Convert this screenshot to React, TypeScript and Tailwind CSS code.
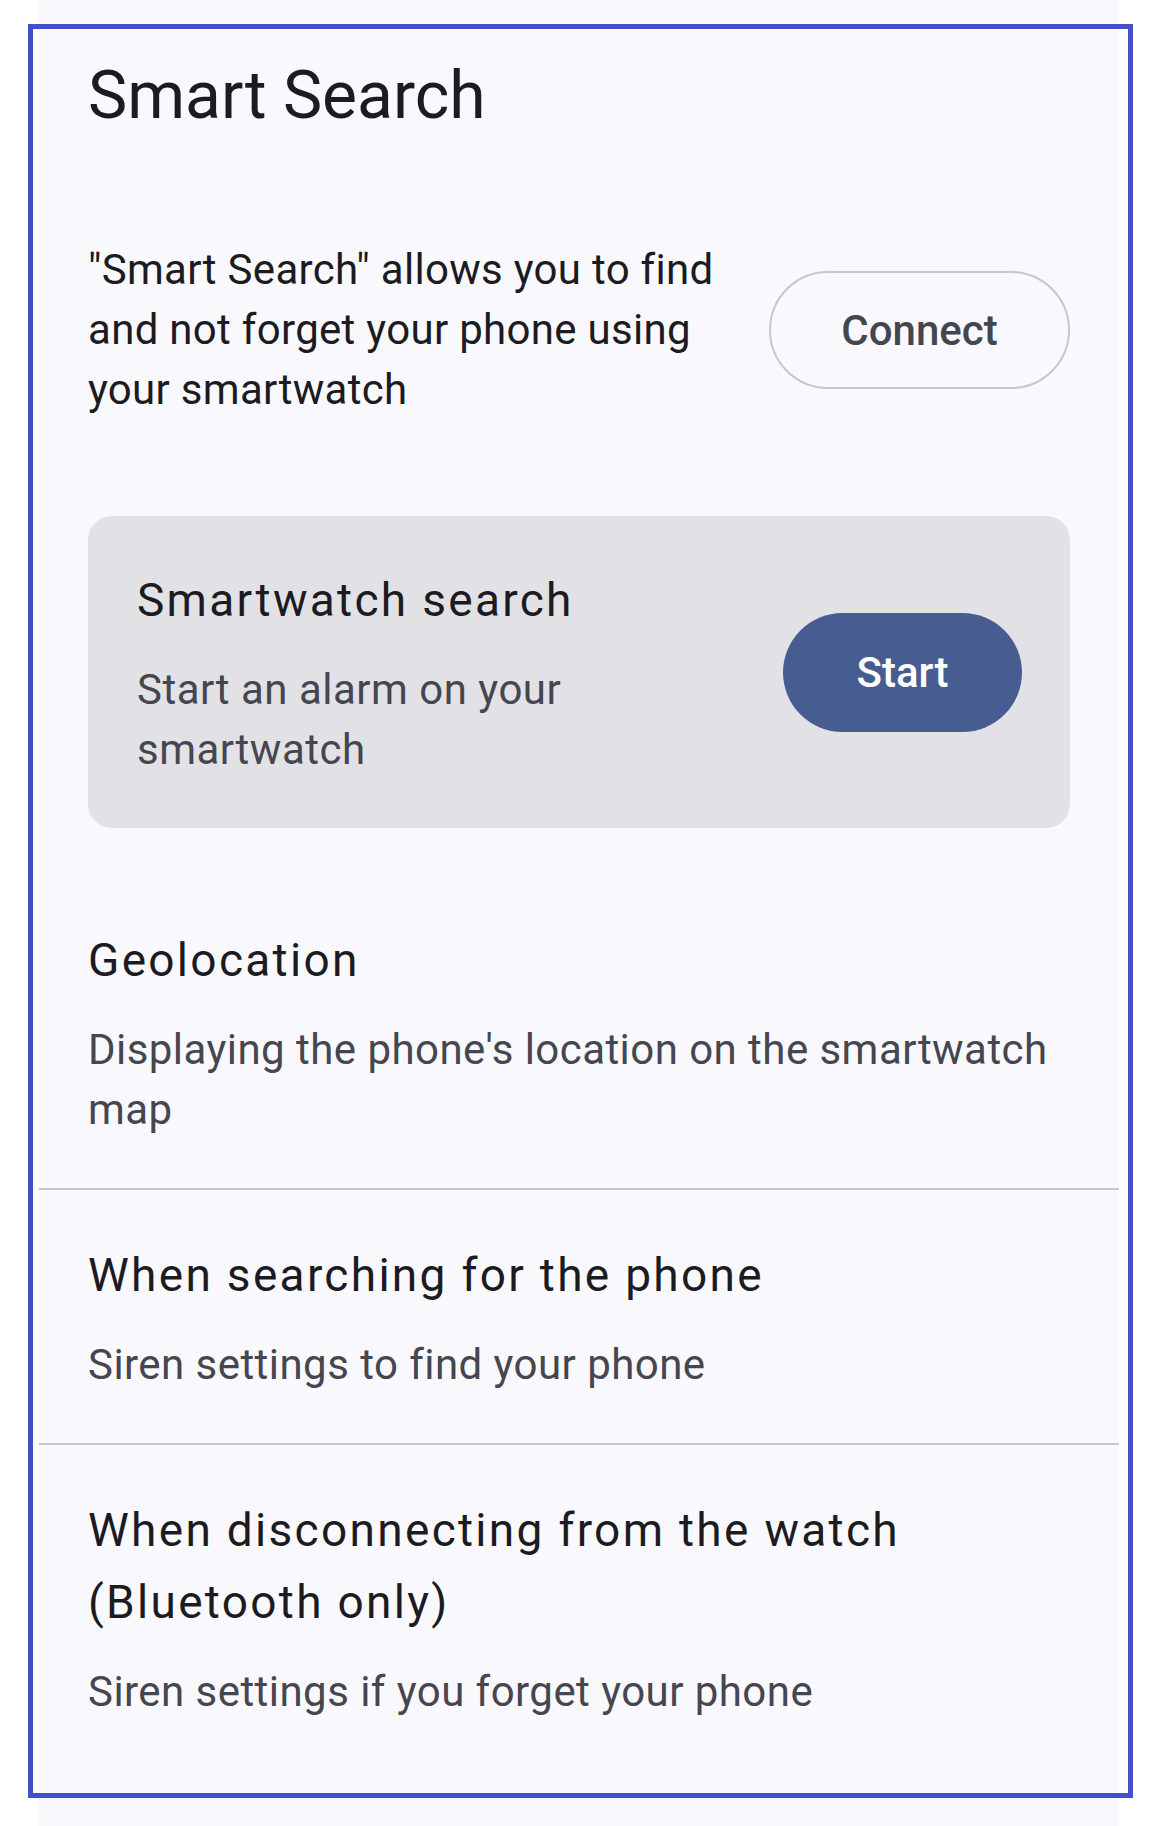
const sections = [
  {
    title: "Geolocation",
    desc: "Displaying the phone's location on the smartwatch map",
  },
  {
    title: "When searching for the phone",
    desc: "Siren settings to find your phone",
  },
  {
    title: "When disconnecting from the watch (Bluetooth only)",
    desc: "Siren settings if you forget your phone",
    last: true,
  },
];

export default function App() {
  return (
    <div className="relative min-h-[1826px] bg-white font-['Roboto',sans-serif]">
      {/* app surface */}
      <div className="ml-[39px] min-h-[1826px] w-[1080px] bg-[#f9f9fd] pt-[56px]">
        <h1 className="px-[49px] text-[66px] leading-[80px] text-[#1b1b21]">Smart Search</h1>

        <div className="mt-[104px] flex items-center gap-[40px] px-[49px]">
          <p className="flex-1 text-[42px] leading-[60px] tracking-[0.3px] text-[#1b1b21]">
            "Smart Search" allows you to find and not forget your phone using your smartwatch
          </p>
          <button className="h-[118px] w-[301px] shrink-0 rounded-full border-2 border-[#c5c6d0] text-[42px] font-medium text-[#44464f]">
            Connect
          </button>
        </div>

        {/* smartwatch search card */}
        <div className="mx-[49px] mt-[96px] flex items-center gap-[48px] rounded-[24px] bg-[#e2e2e6] py-[48px] pl-[49px] pr-[48px]">
          <div className="flex-1">
            <h2 className="text-[46px] leading-[72px] tracking-[2.3px] text-[#1b1b21]">Smartwatch search</h2>
            <p className="mt-[24px] text-[42px] leading-[60px] tracking-[0.5px] text-[#45464f]">
              Start an alarm on your smartwatch
            </p>
          </div>
          <button className="h-[119px] w-[239px] shrink-0 rounded-full bg-[#475d92] text-[42px] font-medium text-white">
            Start
          </button>
        </div>

        <div className="mt-[47px]">
          {sections.map((s) => (
            <div
              key={s.title}
              className={`px-[49px] pt-[49px] pb-[48px] ${s.last ? "" : "border-b-2 border-[#c4c5ce]"}`}
            >
              <h3 className="text-[46px] leading-[72px] tracking-[2.3px] text-[#1b1b21]">{s.title}</h3>
              <p className="mt-[24px] text-[42px] leading-[60px] tracking-[0.45px] text-[#45464f]">{s.desc}</p>
            </div>
          ))}
        </div>
      </div>

      {/* selection frame */}
      <div className="pointer-events-none absolute left-[28px] top-[24px] h-[1774px] w-[1105px] border-[5px] border-[#4450c8]" />
    </div>
  );
}
